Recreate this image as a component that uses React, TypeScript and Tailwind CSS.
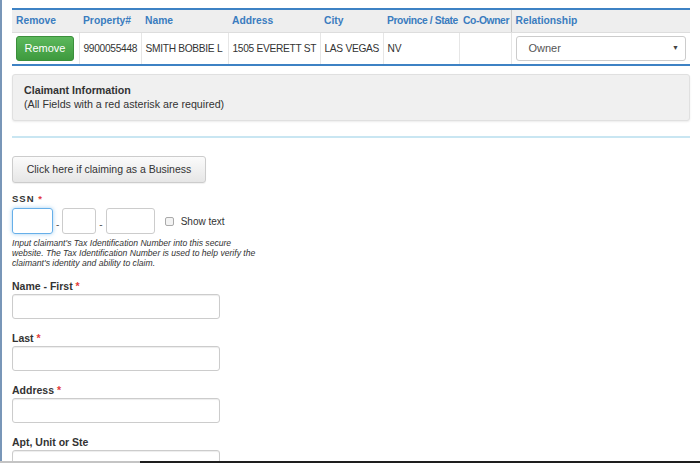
const cols = [
  { label: 'Remove', w: 'w-[67px]' },
  { label: 'Property#', w: 'w-[62px]' },
  { label: 'Name', w: 'w-[87px]' },
  { label: 'Address', w: 'w-[92px]' },
  { label: 'City', w: 'w-[63px]' },
  { label: 'Province / State', w: 'w-[76px]' },
  { label: 'Co-Owner', w: 'w-[52px]' },
  { label: 'Relationship', w: '' },
]

function Req() {
  return <span className="text-[#e23b3b]">*</span>
}

function Field({ label, required }: { label: string; required?: boolean }) {
  return (
    <div className="flex flex-col">
      <label className="text-[10.5px] font-bold text-[#333] leading-[12px] mb-[2px]">
        {label}
        {required && <> <Req /></>}
      </label>
      <input className="w-[208px] h-[25px] border border-[#ccc] rounded-[3px] shadow-[inset_0_1px_1px_rgba(0,0,0,0.075)] bg-white" />
    </div>
  )
}

export default function App() {
  return (
    <div className="h-[463px] w-[700px] overflow-hidden bg-white flex flex-col font-['Liberation_Sans',Arial,sans-serif]">
      <div className="flex-1 min-h-0 border-l-2 border-[#7896b8] pl-[10px] pr-[10px] pt-[8px] overflow-hidden">
        {/* Property table */}
        <table className="w-[678px] border-collapse table-fixed border-t-2 border-b-2 border-[#3e82c4]">
          <thead>
            <tr className="bg-[#eeeeee] h-[23px]">
              {cols.map((c, i) => (
                <th
                  key={c.label}
                  className={`${c.w} text-left text-[10.3px] font-bold text-[#3a7cbf] px-[4px] whitespace-nowrap border-b border-[#dddddd] ${
                    i === 7 ? 'border-l border-l-[#c8c8c8]' : ''
                  } ${i === 5 || i === 6 ? 'tracking-[-0.4px]' : ''}`}
                >
                  {c.label}
                </th>
              ))}
            </tr>
          </thead>
          <tbody>
            <tr className="h-[33px] text-[10.2px] text-[#333]">
              <td className="px-[4px]">
                <button className="w-[58px] h-[25px] rounded-[3px] text-white text-[11px] bg-gradient-to-b from-[#5cb85c] to-[#3e9a3e] border border-[#3b8f3b]">
                  Remove
                </button>
              </td>
              <td className="px-[4px] border-l border-[#e6e6e6] whitespace-nowrap tracking-[-0.3px]">9900055448</td>
              <td className="px-[4px] border-l border-[#e6e6e6] whitespace-nowrap tracking-[-0.3px]">SMITH BOBBIE L</td>
              <td className="px-[4px] border-l border-[#e6e6e6] whitespace-nowrap tracking-[-0.3px]">1505 EVERETT ST</td>
              <td className="px-[4px] border-l border-[#e6e6e6] whitespace-nowrap tracking-[-0.3px]">LAS VEGAS</td>
              <td className="px-[4px] border-l border-[#e6e6e6]">NV</td>
              <td className="px-[4px] border-l border-[#e6e6e6]"></td>
              <td className="px-[4px] border-l border-[#e6e6e6]">
                <div className="h-[25px] border border-[#ccc] rounded-[3px] flex items-center justify-between pl-[12px] pr-[6px] text-[11px] text-[#555]">
                  <span>Owner</span>
                  <span className="text-[7px] text-[#444]">▼</span>
                </div>
              </td>
            </tr>
          </tbody>
        </table>

        {/* Claimant panel */}
        <div className="mt-[8px] w-[678px] h-[47px] bg-[#f0f0f0] border border-[#e0e0e0] rounded-[3px] shadow-[0_1px_2px_rgba(0,0,0,0.08)] px-[11px] pt-[8px] text-[10.7px] leading-[14px] text-[#333]">
          <div className="font-bold">Claimant Information</div>
          <div>(All Fields with a red asterisk are required)</div>
        </div>

        <div className="mt-[15px] w-[678px] h-[2px] bg-[#c9e6f2]" />

        <button className="mt-[18px] w-[194px] h-[27px] border border-[#ccc] rounded-[3px] bg-gradient-to-b from-[#fbfbfb] to-[#e6e6e6] text-[10.5px] text-[#333] shadow-[0_1px_1px_rgba(0,0,0,0.06)]">
          Click here if claiming as a Business
        </button>

        {/* SSN */}
        <div className="mt-[10px] text-[9.5px] font-bold text-[#333] leading-[12px] tracking-[1px]">
          SSN <Req />
        </div>
        <div className="mt-[3px] flex items-center">
          <input className="w-[41px] h-[26px] border border-[#66afe9] rounded-[3px] shadow-[0_0_4px_rgba(102,175,233,0.6)]" />
          <span className="mx-[3px] text-[10px] text-[#555] mt-[6px]">-</span>
          <input className="w-[34px] h-[26px] border border-[#ccc] rounded-[3px]" />
          <span className="mx-[3px] text-[10px] text-[#555] mt-[6px]">-</span>
          <input className="w-[49px] h-[26px] border border-[#ccc] rounded-[3px]" />
          <span className="ml-[10px] w-[9px] h-[9px] border border-[#aaa] rounded-[2px] bg-[#f3f3f3]" />
          <span className="ml-[7px] text-[10px] text-[#333]">Show text</span>
        </div>
        <p className="mt-[5px] w-[246px] text-[8.6px] italic leading-[9.8px] text-[#333]">
          Input claimant's Tax Identification Number into this secure website. The Tax Identification Number is used to help verify the claimant's identity and ability to claim.
        </p>

        <div className="mt-[12px] flex flex-col gap-[13px]">
          <Field label="Name - First" required />
          <Field label="Last" required />
          <Field label="Address" required />
          <Field label="Apt, Unit or Ste" />
        </div>
      </div>
      <div className="h-[2px] flex shrink-0">
        <div className="w-[140px] bg-[#c4c4c4]" />
        <div className="flex-1 bg-[#1e1e1e]" />
      </div>
    </div>
  )
}
